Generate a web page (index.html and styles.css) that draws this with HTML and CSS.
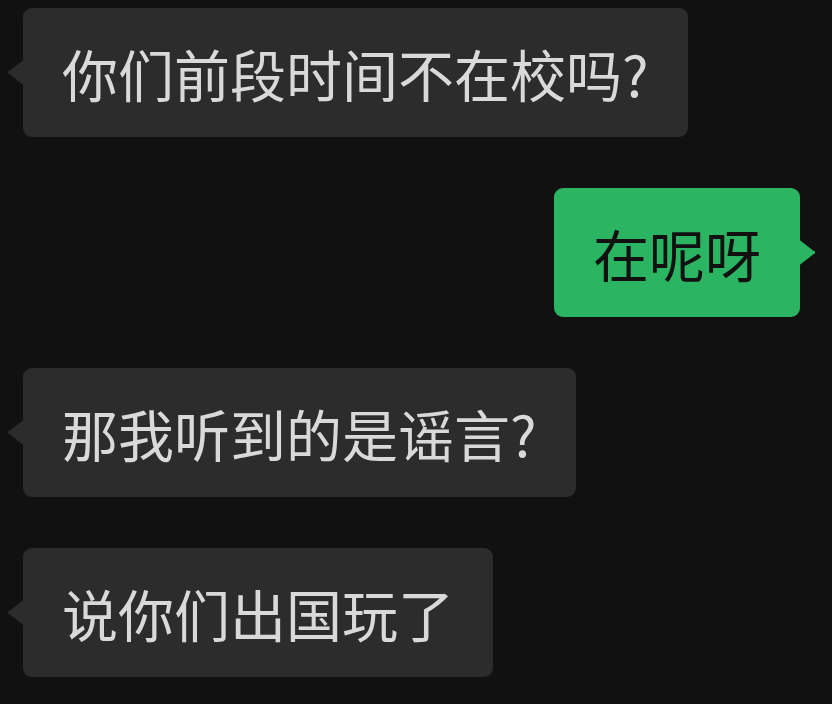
FILE: index.html
```html
<!DOCTYPE html>
<html lang="zh-CN">
<head>
    <meta charset="UTF-8">
    <title>Chat</title>
    <link rel="stylesheet" href="styles.css">
</head>
<body>
    <div class="chat">
        <div class="row">
            <div class="bubble">你们前段时间不在校吗?</div>
        </div>
        <div class="row mine">
            <div class="bubble">在呢呀</div>
        </div>
        <div class="row">
            <div class="bubble">那我听到的是谣言?</div>
        </div>
        <div class="row">
            <div class="bubble">说你们出国玩了</div>
        </div>
    </div>
</body>
</html>
```

FILE: styles.css
```css
body {
    margin: 0;
    background-color: #111111;
    font-family: "Noto Sans CJK SC", "Noto Sans", sans-serif;
}

.chat {
    display: flex;
    flex-direction: column;
    gap: 51px;
    padding: 8px 32px 0 23px;
}

.row {
    display: flex;
}

.row.mine {
    justify-content: flex-end;
}

.bubble {
    position: relative;
    background-color: #2c2c2c;
    color: #d9d9d9;
    font-size: 56px;
    line-height: 77px;
    height: 77px;
    padding: 26px 39px 26px 39px;
    border-radius: 9px;
    white-space: nowrap;
}

/* little tail pointing to the speaker */
.bubble::before {
    content: "";
    position: absolute;
    top: 50%;
    left: -15px;
    width: 16px;
    height: 26px;
    margin-top: -13px;
    background-color: inherit;
    clip-path: polygon(0 46%, 12% 42%, 100% 0, 100% 100%, 12% 58%, 0 54%);
}

.mine .bubble {
    background-color: #2bb462;
    color: #111111;
}

.mine .bubble::before {
    left: auto;
    right: -15px;
    clip-path: polygon(100% 46%, 88% 42%, 0 0, 0 100%, 88% 58%, 100% 54%);
}
```
